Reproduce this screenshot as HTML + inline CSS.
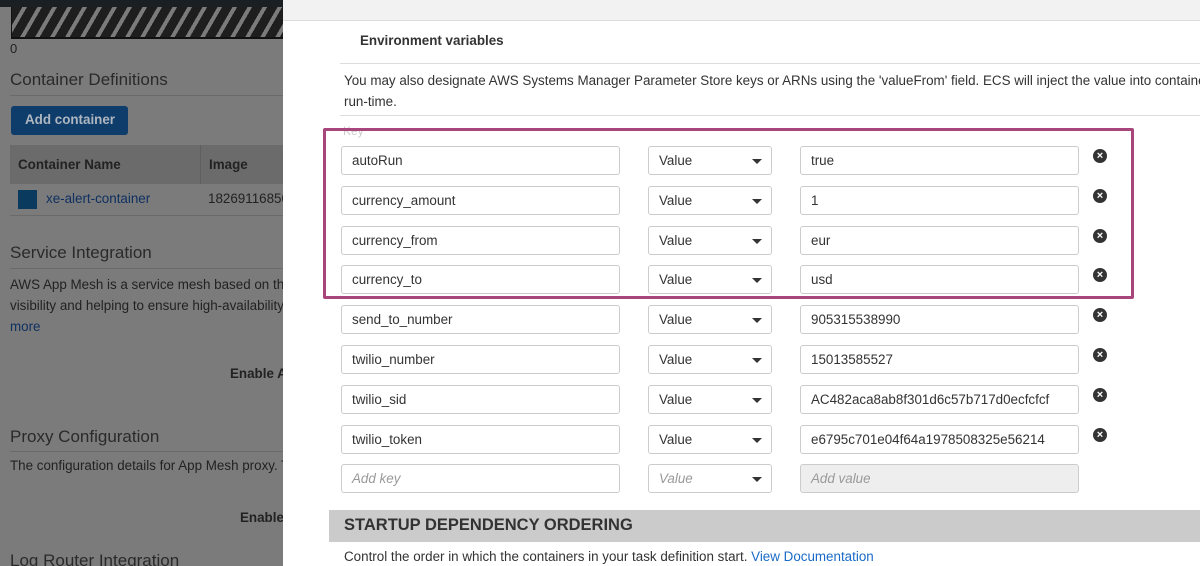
<!DOCTYPE html>
<html><head><style>
*{box-sizing:border-box;margin:0;padding:0}
html,body{overflow:hidden}
body{width:1200px;height:566px;overflow:hidden;position:relative;font-family:"Liberation Sans",Arial,sans-serif;background:#fff}
.left{position:absolute;left:0;top:0;width:283px;height:566px;background:#7b7b7b;color:#222;overflow:hidden}
.a{position:absolute;white-space:nowrap}
.panel{position:absolute;left:283px;top:0;width:917px;height:566px;background:#fff;overflow:hidden}
.inp{position:absolute;height:29px;border:1px solid #ccc;border-radius:3px;background:#fff;font-size:13.4px;color:#333;padding:6px 10px;white-space:nowrap;overflow:hidden}
.ph{color:#999;font-style:italic}
.sel:after{content:"";position:absolute;right:9px;top:12px;border-left:5px solid transparent;border-right:5px solid transparent;border-top:5px solid #333}
.x{position:absolute;width:14px;height:14px;border-radius:50%;background:#333;color:#fff;font-size:11px;line-height:14px;text-align:center;font-weight:bold}
</style></head><body>
<div class="left">
<div class="a" style="left:0;top:0;width:283px;height:7px;background:#1a1f24"></div>
<div class="a" style="left:11px;top:7px;width:272px;height:32px;border-left:1px solid #111;border-bottom:2px solid #111;background:repeating-linear-gradient(120deg,#1e1e1e 0 9px,#7b7b7b 9px 13px)"></div>
<div class="a" style="left:10px;top:41px;font-size:13px;color:#222">0</div>
<div class="a" style="left:10px;top:70px;font-size:17px;color:#2a2a2a">Container Definitions</div>
<div class="a" style="left:10px;top:95px;width:273px;border-top:1px solid #6a6a6a"></div>
<div class="a" style="left:11px;top:106px;width:117px;height:29px;background:#0e3d6b;border-radius:3px;color:#aeb7c0;font-weight:bold;font-size:13.4px;padding:6px 14px">Add container</div>
<div class="a" style="left:10px;top:145px;width:273px;height:39px;background:#6b6b6b"></div>
<div class="a" style="left:200px;top:145px;height:39px;border-left:1px solid #5f5f5f"></div>
<div class="a" style="left:18px;top:157px;font-size:13.4px;font-weight:bold;color:#222">Container Name</div>
<div class="a" style="left:209px;top:157px;font-size:13.4px;font-weight:bold;color:#222">Image</div>
<div class="a" style="left:18px;top:190px;width:19px;height:19px;background:#0a3a5e"></div>
<div class="a" style="left:46px;top:191px;font-size:13.4px;color:#0f3060">xe-alert-container</div>
<div class="a" style="left:208px;top:191px;font-size:13.4px;color:#222">18269116850</div>
<div class="a" style="left:10px;top:215px;width:273px;border-top:1px solid #6a6a6a"></div>
<div class="a" style="left:10px;top:243px;font-size:17px;color:#2a2a2a">Service Integration</div>
<div class="a" style="left:10px;top:268px;width:273px;border-top:1px solid #6a6a6a"></div>
<div class="a" style="left:10px;top:274px;font-size:13.4px;color:#222;line-height:21px">AWS App Mesh is a service mesh based on th<br>visibility and helping to ensure high-availability<br><span style="color:#0f3060">more</span></div>
<div class="a" style="left:230px;top:366px;font-size:13.4px;font-weight:bold;color:#222">Enable A</div>
<div class="a" style="left:10px;top:427px;font-size:17px;color:#2a2a2a">Proxy Configuration</div>
<div class="a" style="left:10px;top:451px;width:273px;border-top:1px solid #6a6a6a"></div>
<div class="a" style="left:10px;top:458px;font-size:13.4px;color:#222">The configuration details for App Mesh proxy. T</div>
<div class="a" style="left:240px;top:510px;font-size:13.4px;font-weight:bold;color:#222">Enable</div>
<div class="a" style="left:10px;top:551px;font-size:17px;color:#2a2a2a">Log Router Integration</div>
</div>
<div class="panel">
<div class="a" style="left:0;top:0;width:917px;height:21px;background:#f2f2f2;border-bottom:1px solid #ddd"></div>
<div class="a" style="left:77px;top:33px;font-size:13.4px;font-weight:bold;color:#333">Environment variables</div>
<div class="a" style="left:57px;top:63px;width:860px;border-top:1px solid #ddd"></div>
<div class="a" style="left:61px;top:70px;font-size:13.4px;color:#333;line-height:21px">You may also designate AWS Systems Manager Parameter Store keys or ARNs using the 'valueFrom' field. ECS will inject the value into containers at<br>run-time.</div>
<div class="a" style="left:57px;top:115px;width:860px;border-top:1px solid #ddd"></div>
<div class="a" style="left:60px;top:124px;font-size:12px;color:#ccc">Key</div>
</div>
<div id="rows"></div>
<div class="a" style="left:323px;top:128px;width:811px;height:171px;border:3px solid #a8457a;border-radius:2px"></div>
<div class="a" style="left:329px;top:510px;width:871px;height:32px;background:#cbcbcb;font-size:16.5px;font-weight:bold;color:#333;padding:6px 15px">STARTUP DEPENDENCY ORDERING</div>
<div class="a" style="left:344px;top:549px;font-size:13.4px;color:#333">Control the order in which the containers in your task definition start. <span style="color:#1a6bc7">View Documentation</span></div>
<script>
var d=[["autoRun","true"],["currency_amount","1"],["currency_from","eur"],["currency_to","usd"],["send_to_number","905315538990"],["twilio_number","15013585527"],["twilio_sid","AC482aca8ab8f301d6c57b717d0ecfcfcf"],["twilio_token","e6795c701e04f64a1978508325e56214"]];
var h="";
for(var i=0;i<9;i++){var t=146+Math.round(i*39.8);
if(i<8){h+='<div class="inp" style="left:341px;top:'+t+'px;width:279px">'+d[i][0]+'</div><div class="inp sel" style="left:648px;top:'+t+'px;width:124px">Value</div><div class="inp" style="left:800px;top:'+t+'px;width:279px">'+d[i][1]+'</div><div class="x" style="left:1093px;top:'+(t+3)+'px">×</div>';}
else{h+='<div class="inp ph" style="left:341px;top:'+t+'px;width:279px">Add key</div><div class="inp sel ph" style="left:648px;top:'+t+'px;width:124px">Value</div><div class="inp ph" style="left:800px;top:'+t+'px;width:279px;background:#eee">Add value</div>';}}
document.getElementById("rows").innerHTML=h;
</script>
</body></html>
